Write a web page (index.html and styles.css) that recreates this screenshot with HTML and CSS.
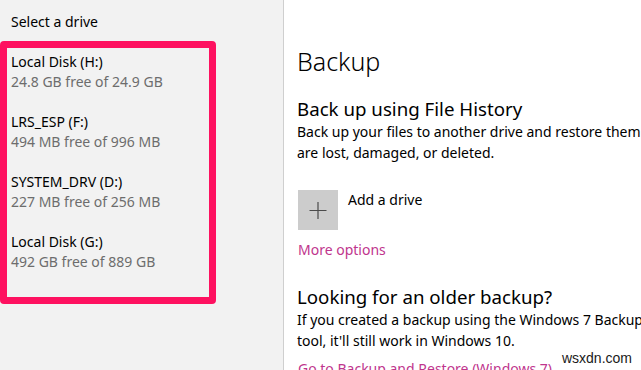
FILE: index.html
```html
<!DOCTYPE html>
<html lang="en">
  <head>
    <meta charset="UTF-8">
    <meta name="viewport" content="width=device-width, initial-scale=1.0">
    <title>Backup</title>
    <link rel="stylesheet" href="styles.css">
  </head>
  <body>
    <div class="window">
        <div class="sidebar">
            <p class="sidebar-title">Select a drive</p>
            <ul class="drive-list">
                <li class="drive">
                    <span class="drive-name">Local Disk (H:)</span>
                    <span class="drive-space">24.8 GB free of 24.9 GB</span>
                </li>
                <li class="drive">
                    <span class="drive-name">LRS_ESP (F:)</span>
                    <span class="drive-space">494 MB free of 996 MB</span>
                </li>
                <li class="drive">
                    <span class="drive-name">SYSTEM_DRV (D:)</span>
                    <span class="drive-space">227 MB free of 256 MB</span>
                </li>
                <li class="drive">
                    <span class="drive-name">Local Disk (G:)</span>
                    <span class="drive-space">492 GB free of 889 GB</span>
                </li>
            </ul>
        </div>

        <div class="content">
            <h1>Backup</h1>

            <h2>Back up using File History</h2>
            <p class="desc">Back up your files to another drive and restore them if the originals<br>are lost, damaged, or deleted.</p>

            <div class="add-drive">
                <span class="add-icon">
                    <svg width="40" height="40" viewBox="0 0 40 40">
                        <path d="M20 12v17M11.5 20.5h17" stroke="#4a4a4a" stroke-width="1.2" fill="none"/>
                    </svg>
                </span>
                <span class="add-label">Add a drive</span>
            </div>

            <a class="link more" href="#">More options</a>

            <h2 class="older">Looking for an older backup?</h2>
            <p class="desc">If you created a backup using the Windows 7 Backup and Restore<br>tool, it'll still work in Windows 10.</p>
            <a class="link restore" href="#">Go to Backup and Restore (Windows 7)</a>
        </div>
    </div>

    <div class="watermark">wsxdn.com</div>
  </body>
</html>
```

FILE: styles.css
```css
body {
    margin: 0;
    font-family: 'Noto Sans', 'Open Sans', sans-serif;
    font-size: 14px;
    color: #000;
    background: white;
    overflow: hidden;
}
.window {
    display: flex;
    height: 370px;
}
.sidebar {
    width: 283px;
    flex-shrink: 0;
    background: #f2f2f2;
    border-right: 1px solid #cfcfcf;
    padding-top: 12px;
}
.sidebar-title {
    margin: 0 0 9px 11px;
    line-height: 20px;
}
.drive-list {
    list-style: none;
    margin: 0;
    width: 216px;
    box-sizing: border-box;
    padding: 4px 4px 25px 4px;
    border: 7px solid #fe1160;
    border-radius: 4px;
    display: flex;
    flex-direction: column;
    gap: 20px;
}
.drive {
    display: flex;
    flex-direction: column;
    line-height: 20px;
}
.drive-space {
    color: #6d6d6d;
}
.content {
    flex: 1;
    padding: 45px 0 0 13px;
    white-space: nowrap;
    overflow: hidden;
}
h1 {
    margin: 0;
    font-size: 25px;
    font-weight: 300;
    line-height: 32px;
}
h2 {
    margin: 20px 0 0 0;
    font-size: 18.7px;
    font-weight: 400;
    line-height: 24px;
}
.desc {
    margin: 0;
    line-height: 21px;
}
.add-drive {
    display: flex;
    align-items: flex-start;
    gap: 10px;
    margin-top: 27px;
    padding-left: 1px;
}
.add-icon {
    width: 40px;
    height: 40px;
    background: #cccccc;
    display: block;
}
.add-icon svg {
    display: block;
}
.add-label {
    line-height: 20px;
}
.link {
    display: block;
    color: #c0358d;
    text-decoration: none;
    line-height: 20px;
    padding-left: 1px;
}
.more {
    margin-top: 10px;
}
h2.older {
    margin-top: 25px;
}
.restore {
    margin-top: 8px;
}
.watermark {
    position: absolute;
    right: 0;
    bottom: 0;
    background: white;
    padding: 0 9px 3px 7px;
    font-family: 'Liberation Sans', Arial, sans-serif;
    font-size: 14px;
    line-height: 17px;
    color: #1a1a1a;
}
```
